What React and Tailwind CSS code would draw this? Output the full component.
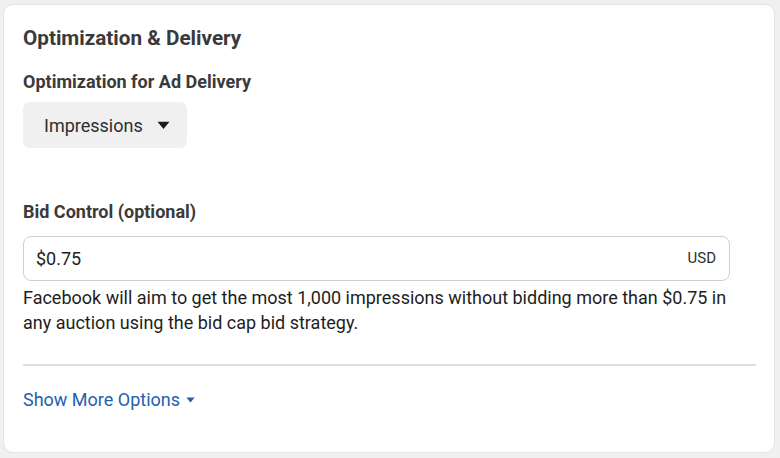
const Caret = ({ className }) => (
  <svg viewBox="0 0 12 8" className={className} fill="currentColor">
    <path d="M0.5 0.5h11L6 7.2z" />
  </svg>
);

export default function App() {
  return (
    <div className="w-[780px] h-[458px] bg-[#f0f0f0] pt-[4px] pl-[3px] pr-[5px] pb-[5px] font-['Roboto',Arial,sans-serif]">
      <div className="h-full bg-white rounded-[10px] border border-[#e4e4e4] pl-[19px] pr-[19px] pt-[21px]">
        <h2 className="text-[20.7px] leading-[24px] font-bold text-[#3a3a3a]">Optimization &amp; Delivery</h2>

        <div className="mt-[22px] text-[18px] leading-[20px] font-bold text-[#3a3a3a]">Optimization for Ad Delivery</div>
        <button className="mt-[10px] h-[46px] w-[164px] rounded-[7px] bg-[#f0f0f0] flex items-center pl-[21px] gap-[14px] text-[18px] text-[#2e2e2e]">
          <span>Impressions</span>
          <Caret className="w-[13px] h-[9px] text-[#1c1c1c]" />
        </button>

        <div className="mt-[54px] text-[18px] leading-[20px] font-bold text-[#3a3a3a]">Bid Control (optional)</div>
        <div className="mt-[14px] w-[707px] h-[45px] rounded-[8px] border border-[#cfcfcf] flex items-center justify-between pl-[12px] pr-[13px]">
          <span className="text-[18px] text-[#1e1e1e]">$0.75</span>
          <span className="text-[15px] text-[#2e2e2e]">USD</span>
        </div>
        <p className="mt-[4px] text-[18px] leading-[25px] text-[#1e1e1e] w-[720px]">
          Facebook will aim to get the most 1,000 impressions without bidding more than $0.75 in any auction using the bid cap bid strategy.
        </p>

        <div className="mt-[29px] h-[2px] bg-[#dedede] w-[733px]" />

        <button className="mt-[20px] flex items-center gap-[6px] text-[18px] leading-[27px] text-[#2460b0]">
          <span>Show More Options</span>
          <Caret className="w-[9px] h-[6px]" />
        </button>
      </div>
    </div>
  );
}
